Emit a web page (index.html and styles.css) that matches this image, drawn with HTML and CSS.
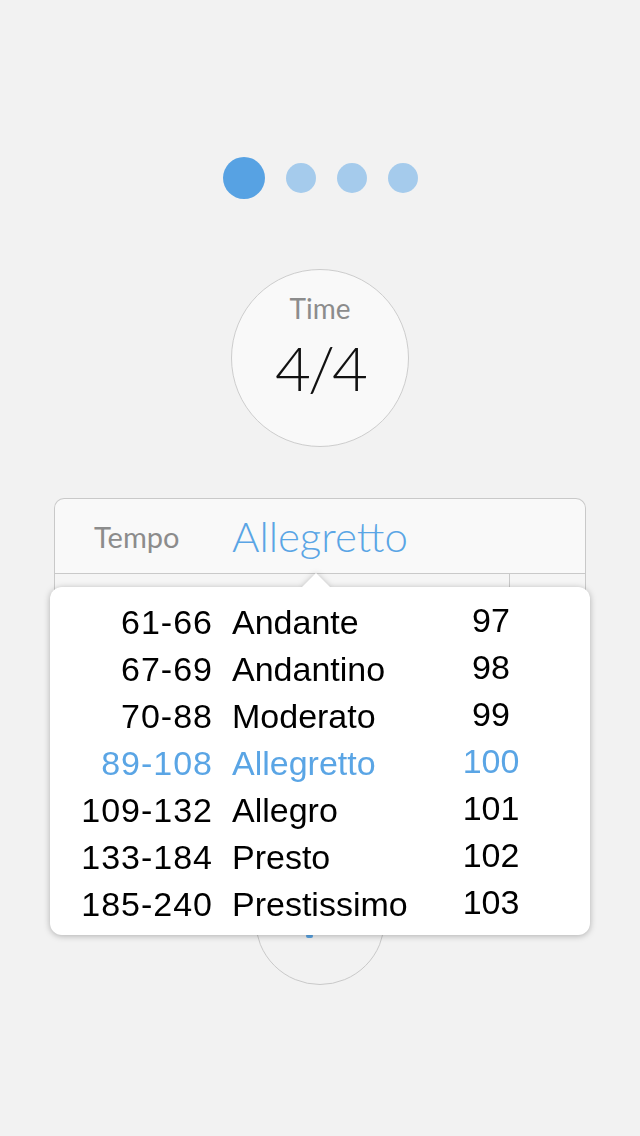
FILE: index.html
```html
<!DOCTYPE html>
<html>
<head>
<meta charset="utf-8">
<link rel="stylesheet" href="styles.css">
</head>
<body>
<div class="page">
  <div class="dots">
    <span class="dot dot-active"></span>
    <span class="dot"></span>
    <span class="dot"></span>
    <span class="dot"></span>
  </div>

  <div class="time-circle">
    <div class="time-label">Time</div>
    <div class="time-value">4/4</div>
  </div>

  <div class="panel">
    <div class="panel-header">
      <span class="tempo-label">Tempo</span>
      <span class="tempo-value">Allegretto</span>
    </div>
    <div class="panel-body">
      <div class="panel-cell"></div>
      <div class="panel-cell panel-cell-side"></div>
    </div>

    <div class="popover">
      <div class="picker">
        <span class="range">61-66</span><span class="name">Andante</span><span class="bpm">97</span>
        <span class="range">67-69</span><span class="name">Andantino</span><span class="bpm">98</span>
        <span class="range">70-88</span><span class="name">Moderato</span><span class="bpm">99</span>
        <span class="range sel">89-108</span><span class="name sel">Allegretto</span><span class="bpm sel">100</span>
        <span class="range">109-132</span><span class="name">Allegro</span><span class="bpm">101</span>
        <span class="range">133-184</span><span class="name">Presto</span><span class="bpm">102</span>
        <span class="range">185-240</span><span class="name">Prestissimo</span><span class="bpm">103</span>
      </div>
    </div>
  </div>

  <div class="play-circle">
    <span class="play-mark"></span>
  </div>
</div>
</body>
</html>
```

FILE: styles.css
```css
html, body {
  margin: 0;
  padding: 0;
}

body {
  background: #f2f2f2;
  width: 640px;
  min-height: 1136px;
  font-family: "Lato", "Liberation Sans", sans-serif;
}

.page {
  display: flex;
  flex-direction: column;
  align-items: center;
  padding-top: 157px;
}

.dots {
  display: flex;
  align-items: center;
  gap: 21px;
  height: 42px;
}

.dot {
  width: 30px;
  height: 30px;
  border-radius: 50%;
  background: #a5cbec;
}

.dot-active {
  width: 42px;
  height: 42px;
  background: #57a2e3;
}

.time-circle {
  margin-top: 70px;
  width: 178px;
  height: 178px;
  box-sizing: border-box;
  border: 1px solid #cdcdcd;
  border-radius: 50%;
  background: #f9f9f9;
  display: flex;
  flex-direction: column;
  align-items: center;
}

.time-label {
  margin-top: 20px;
  font-size: 28px;
  font-weight: 400;
  color: #8c8c8c;
  line-height: 36px;
}

.time-value {
  margin-top: 6px;
  font-size: 62px;
  font-weight: 300;
  letter-spacing: -3px;
  color: #111;
  line-height: 70px;
}

.panel {
  position: relative;
  margin-top: 51px;
  width: 532px;
}

.panel-header {
  height: 75px;
  box-sizing: border-box;
  border: 1px solid #c9c9c9;
  border-bottom: none;
  border-radius: 10px 10px 0 0;
  background: #f9f9f9;
  display: flex;
  align-items: center;
  padding-left: 39px;
}

.tempo-label {
  width: 138px;
  font-size: 29px;
  font-weight: 400;
  color: #8c8c8c;
}

.tempo-value {
  font-size: 42px;
  font-weight: 300;
  color: #5aa5e5;
}

.panel-body {
  display: flex;
  height: 200px;
  border: 1px solid #c9c9c9;
  background: #f5f5f5;
}

.panel-cell {
  flex: 1;
}

.panel-cell-side {
  flex: 0 0 75px;
  border-left: 1px solid #c9c9c9;
}

.popover {
  position: absolute;
  left: -4px;
  top: 89px;
  width: 540px;
  height: 348px;
  box-sizing: border-box;
  background: #fff;
  border-radius: 12px;
  filter: drop-shadow(0 1px 3px rgba(0, 0, 0, 0.28));
  padding-top: 12px;
  font-family: "Liberation Sans", Arial, sans-serif;
}

.popover::before {
  content: "";
  position: absolute;
  left: 252px;
  top: -14px;
  width: 0;
  height: 0;
  border-left: 14px solid transparent;
  border-right: 14px solid transparent;
  border-bottom: 14px solid #fff;
}

.picker {
  display: grid;
  grid-template-columns: 162px 210px 138px;
  grid-auto-rows: 47px;
  font-size: 34px;
  color: #000;
}

.range {
  text-align: right;
  line-height: 47px;
  letter-spacing: 1px;
  margin-right: -1px;
}

.name {
  padding-left: 20px;
  line-height: 47px;
}

.bpm {
  text-align: center;
  line-height: 43px;
}

.sel {
  color: #5aa5e5;
}

.play-circle {
  margin-top: 80px;
  width: 130px;
  height: 130px;
  box-sizing: border-box;
  border: 1px solid #c9c9c9;
  border-radius: 50%;
  display: flex;
  justify-content: center;
}

.play-mark {
  margin-top: 78px;
  margin-right: 22px;
  width: 7px;
  height: 4px;
  border-radius: 2px;
  background: #5aa5e5;
}
```
